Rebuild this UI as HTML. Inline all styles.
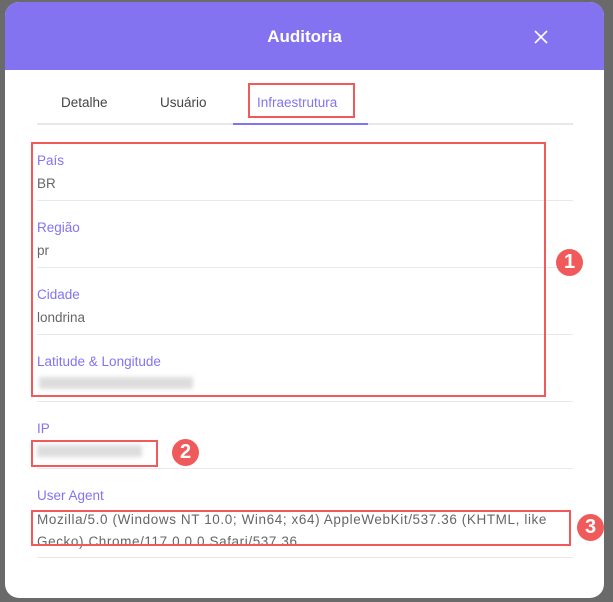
<!DOCTYPE html><html><head><style>
body{margin:0;width:613px;height:602px;background:#6a6a6a;position:relative;overflow:hidden;font-family:"Liberation Sans",sans-serif}
.m{position:absolute;left:5px;top:2px;width:599px;height:596px;background:#fff;border-radius:14px;overflow:hidden}
.h{height:68px;background:#8373f1;color:#fff;font-size:17px;font-weight:bold;text-align:center;line-height:70px}
.x{position:absolute;left:527px;top:26px}
.a{position:absolute;font-size:13.5px}
.t{color:#444;top:93px}
.l{color:#8373f1;left:32px}
.v{color:#666;left:32px}
.d{position:absolute;left:32px;width:536px;height:1px;background:#e8e8e8}
.r{position:absolute;border:2px solid #f05a5a;box-sizing:border-box}
.c{position:absolute;width:27px;height:27px;border-radius:50%;background:#f05a5a;color:#fff;font-weight:bold;font-size:20px;text-align:center;line-height:27px}
.b{position:absolute;height:12px;background:#ddd;filter:blur(2px)}
</style></head><body><div class="m">
<div class="h">Auditoria</div>
<svg class="x" width="18" height="18" viewBox="0 0 18 18"><path d="M3 3L15 15M15 3L3 15" stroke="#fff" stroke-width="1.6"/></svg>
<div class="a t" style="left:56px">Detalhe</div>
<div class="a t" style="left:155px">Usuário</div>
<div class="a t" style="left:252px;color:#8373f1">Infraestrutura</div>
<div class="r" style="left:243px;top:81px;width:107px;height:35px"></div>
<div class="d" style="top:121px;height:2px;background:#e8e8e8"></div>
<div style="position:absolute;left:228px;top:121px;width:135px;height:2px;background:#8373f1"></div>
<div class="a l" style="top:151px">País</div><div class="a v" style="top:174px">BR</div><div class="d" style="top:198px"></div>
<div class="a l" style="top:218px">Região</div><div class="a v" style="top:241px">pr</div><div class="d" style="top:265px"></div>
<div class="a l" style="top:285px">Cidade</div><div class="a v" style="top:308px">londrina</div><div class="d" style="top:332px"></div>
<div class="a l" style="top:352px">Latitude &amp; Longitude</div><div class="b" style="left:34px;top:375px;width:154px"></div><div class="d" style="top:399px"></div>
<div class="a l" style="top:419px">IP</div><div class="b" style="left:32px;top:443px;width:105px"></div><div class="d" style="top:466px"></div>
<div class="a l" style="top:486px">User Agent</div>
<div class="a v" style="top:507px;width:530px;line-height:22px;font-size:13.5px;letter-spacing:.6px">Mozilla/5.0 (Windows NT 10.0; Win64; x64) AppleWebKit/537.36 (KHTML, like Gecko) Chrome/117.0.0.0 Safari/537.36</div>
<div class="d" style="top:555px"></div>
<div class="r" style="left:26px;top:140px;width:515px;height:255px"></div>
<div class="r" style="left:26px;top:438px;width:127px;height:27px"></div>
<div class="r" style="left:26px;top:508px;width:540px;height:36px"></div>
<div class="c" style="left:551px;top:247px">1</div>
<div class="c" style="left:167px;top:437px">2</div>
<div class="c" style="left:572px;top:512px">3</div>
</div></body></html>
